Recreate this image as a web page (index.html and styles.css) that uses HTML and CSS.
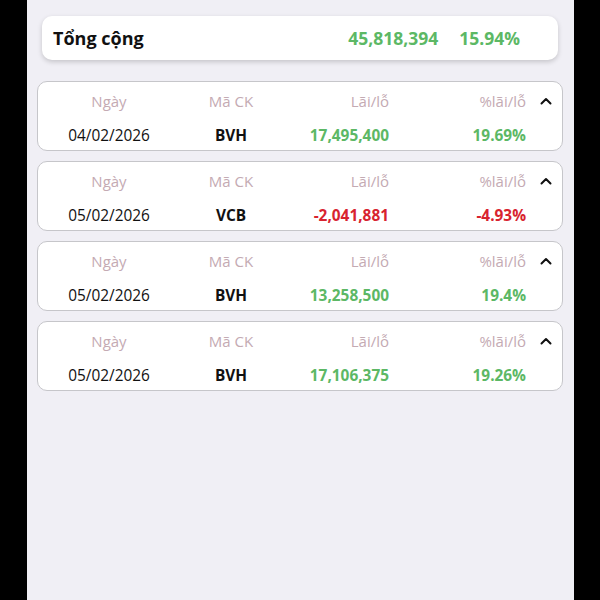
FILE: index.html
```html
<!DOCTYPE html>
<html lang="vi">
<head>
    <meta charset="UTF-8">
    <meta name="viewport" content="width=device-width, initial-scale=1.0">
    <title>Lãi/lỗ</title>
    <link rel="stylesheet" href="styles.css">
</head>
<body>
    <div class="screen">
        <div class="total">
            <span class="total-title">Tổng cộng</span>
            <span class="total-value up">45,818,394</span>
            <span class="total-pct up">15.94%</span>
        </div>

        <div class="list">
            <div class="trade">
                <span class="head c-date">Ngày</span>
                <span class="head c-code">Mã CK</span>
                <span class="head c-pl">Lãi/lỗ</span>
                <span class="head c-pct">%lãi/lỗ</span>
                <span class="toggle"><svg width="12" height="8" viewBox="0 0 12 8"><path d="M1.5 6.5 L6 2 L10.5 6.5" fill="none" stroke="#111" stroke-width="2" stroke-linecap="round" stroke-linejoin="round"/></svg></span>
                <span class="val c-date">04/02/2026</span>
                <span class="val c-code code">BVH</span>
                <span class="val c-pl num up">17,495,400</span>
                <span class="val c-pct num up">19.69%</span>
            </div>
            <div class="trade">
                <span class="head c-date">Ngày</span>
                <span class="head c-code">Mã CK</span>
                <span class="head c-pl">Lãi/lỗ</span>
                <span class="head c-pct">%lãi/lỗ</span>
                <span class="toggle"><svg width="12" height="8" viewBox="0 0 12 8"><path d="M1.5 6.5 L6 2 L10.5 6.5" fill="none" stroke="#111" stroke-width="2" stroke-linecap="round" stroke-linejoin="round"/></svg></span>
                <span class="val c-date">05/02/2026</span>
                <span class="val c-code code">VCB</span>
                <span class="val c-pl num down">-2,041,881</span>
                <span class="val c-pct num down">-4.93%</span>
            </div>
            <div class="trade">
                <span class="head c-date">Ngày</span>
                <span class="head c-code">Mã CK</span>
                <span class="head c-pl">Lãi/lỗ</span>
                <span class="head c-pct">%lãi/lỗ</span>
                <span class="toggle"><svg width="12" height="8" viewBox="0 0 12 8"><path d="M1.5 6.5 L6 2 L10.5 6.5" fill="none" stroke="#111" stroke-width="2" stroke-linecap="round" stroke-linejoin="round"/></svg></span>
                <span class="val c-date">05/02/2026</span>
                <span class="val c-code code">BVH</span>
                <span class="val c-pl num up">13,258,500</span>
                <span class="val c-pct num up">19.4%</span>
            </div>
            <div class="trade">
                <span class="head c-date">Ngày</span>
                <span class="head c-code">Mã CK</span>
                <span class="head c-pl">Lãi/lỗ</span>
                <span class="head c-pct">%lãi/lỗ</span>
                <span class="toggle"><svg width="12" height="8" viewBox="0 0 12 8"><path d="M1.5 6.5 L6 2 L10.5 6.5" fill="none" stroke="#111" stroke-width="2" stroke-linecap="round" stroke-linejoin="round"/></svg></span>
                <span class="val c-date">05/02/2026</span>
                <span class="val c-code code">BVH</span>
                <span class="val c-pl num up">17,106,375</span>
                <span class="val c-pct num up">19.26%</span>
            </div>
        </div>
    </div>
</body>
</html>
```

FILE: styles.css
```css
html, body {
    height: 100%;
}

body {
    margin: 0;
    padding: 0;
    background-color: #000;
    font-family: "Open Sans", "Noto Sans", sans-serif;
    color: #111;
}

.screen {
    margin-left: 27px;
    width: 547px;
    height: 100%;
    background-color: #f0eff5;
    padding-top: 16px;
    box-sizing: border-box;
}

.total {
    display: flex;
    align-items: center;
    height: 44px;
    margin: 0 16px 0 15px;
    padding: 0 38px 0 11px;
    background-color: #fff;
    border-radius: 10px;
    box-shadow: 0 2px 5px rgba(0, 0, 0, 0.18);
}

.total-title {
    flex: 1;
    font-size: 18px;
    font-weight: 700;
}

.total-value,
.total-pct {
    font-size: 17.5px;
    font-weight: 700;
}

.total-pct {
    margin-left: 21px;
}

.list {
    display: flex;
    flex-direction: column;
    gap: 10px;
    margin: 21px 11px 0 10px;
}

.trade {
    display: grid;
    grid-template-columns: 142px 102px 107px 137px 38px;
    grid-auto-rows: 22px;
    row-gap: 12px;
    align-items: center;
    padding: 8px 0 4px;
    background-color: #fff;
    border: 1px solid #c6c6ca;
    border-radius: 10px;
}

.head {
    font-size: 15px;
    color: #c4aab3;
}

.val {
    font-size: 15.4px;
}

.c-date,
.c-code {
    text-align: center;
}

.c-pl,
.c-pct {
    text-align: right;
}

.code {
    font-weight: 700;
}

.num {
    font-weight: 700;
}

.toggle {
    display: flex;
    justify-content: center;
    align-items: center;
    grid-row: 1;
    grid-column: 5;
    padding-left: 2px;
}

.up {
    color: #5cb865;
}

.down {
    color: #d8232f;
}
```
